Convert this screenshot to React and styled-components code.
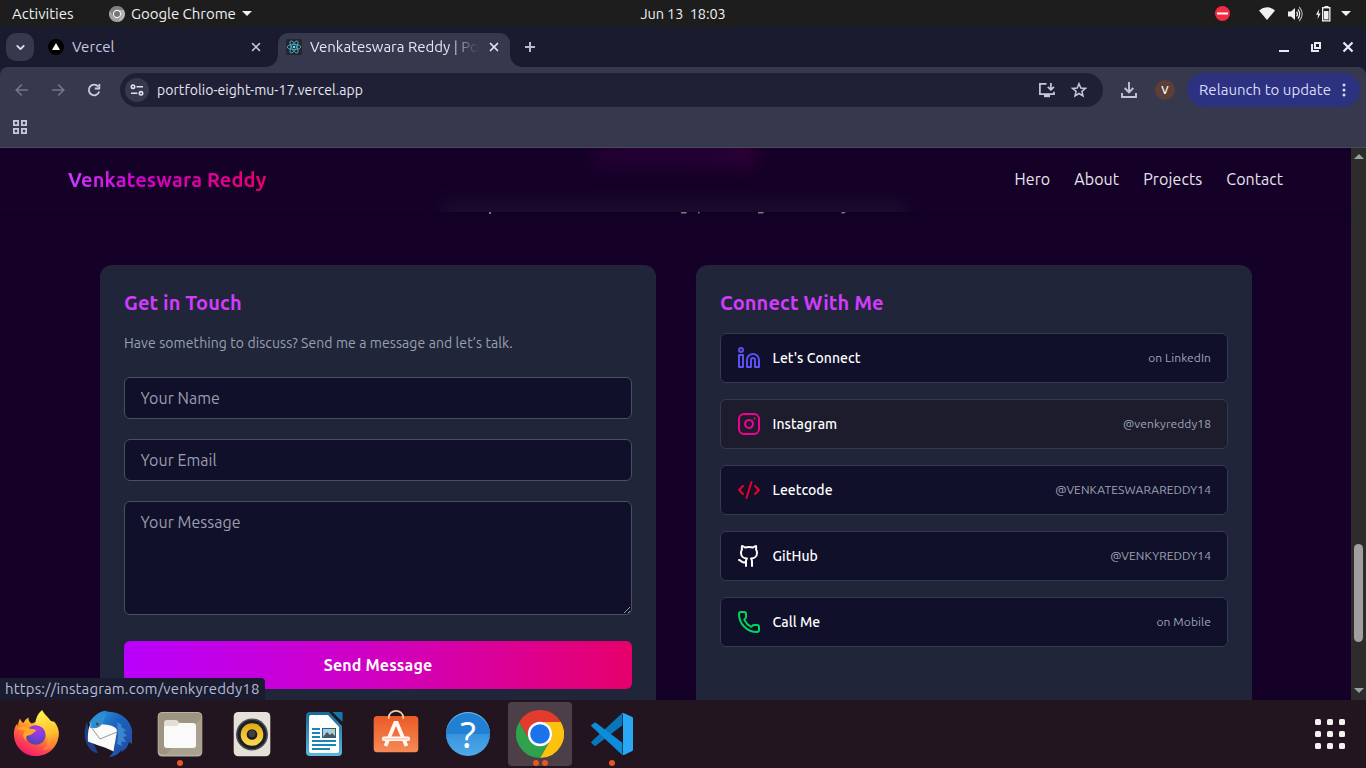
import React from "react";
import styled, { createGlobalStyle, css } from "styled-components";
import { Linkedin, Instagram, CodeXml, Github, Phone, ChevronDown, X } from "lucide-react";

const GlobalStyle = createGlobalStyle`
  * { box-sizing: border-box; }
  body { margin: 0; background: #150028; overflow: hidden; }
  body, input, textarea, button { font-family: "Ubuntu", "Noto Sans", sans-serif; }
  h2, p { margin: 0; }
  svg { display: block; flex: none; }
`;

const Desktop = styled.div`
  width: 1366px;
  height: 768px;
  display: flex;
  flex-direction: column;
  overflow: hidden;
`;

const Label = styled.span`
  white-space: pre;
  font-size: ${(p) => p.$size || 15}px;
  letter-spacing: ${(p) => p.$track || 0}px;
  font-weight: ${(p) => p.$weight || 400};
  color: ${(p) => p.$color || "inherit"};
`;

/* ---------- system bar ---------- */
const SystemBar = styled.header`
  height: 27px;
  flex: none;
  background: #1d1d1d;
  color: #f0f0f0;
  display: grid;
  grid-template-columns: 1fr auto 1fr;
  align-items: center;
  line-height: 27px;
`;
const SystemLeft = styled.div`
  display: flex;
  align-items: center;
  padding-left: 12px;
`;
const ActivitiesLabel = styled.div`
  width: 97px;
`;
const AppMenu = styled.div`
  display: flex;
  align-items: center;
  gap: 6px;
`;
const Caret = styled.span`
  border: 5px solid transparent;
  border-top-color: ${(p) => p.$color || "#f0f0f0"};
  border-bottom: 0;
`;
const SystemTray = styled.div`
  display: flex;
  align-items: center;
  justify-content: flex-end;
  padding-right: 15px;
`;
const TrayItem = styled.span`
  display: flex;
  margin-right: ${(p) => p.$gap}px;
`;

/* ---------- browser chrome ---------- */
const TabStrip = styled.div`
  height: 40px;
  flex: none;
  background: #1a1b2f;
  display: flex;
  padding: 6px 12px 0 6px;
  color: #c9cae0;
`;
const TabSearch = styled.div`
  width: 28px;
  height: 28px;
  border-radius: 10px;
  background: #36384e;
  color: #e4e5f2;
  display: flex;
  align-items: center;
  justify-content: center;
`;
const Tab = styled.div`
  position: relative;
  height: 34px;
  display: flex;
  align-items: center;
  padding-bottom: 6px;
  width: ${(p) => p.$width}px;
  padding-left: ${(p) => p.$left}px;
  padding-right: ${(p) => p.$right}px;
  ${(p) =>
    p.$active &&
    css`
      background: #36384e;
      color: #e6e6f3;
      border-radius: 10px 10px 0 0;
      &::before,
      &::after {
        content: "";
        position: absolute;
        bottom: 0;
        width: 12px;
        height: 12px;
      }
      &::before {
        left: -12px;
        background: radial-gradient(circle at 0 0, transparent 11.5px, #36384e 12px);
      }
      &::after {
        right: -12px;
        background: radial-gradient(circle at 100% 0, transparent 11.5px, #36384e 12px);
      }
    `}
`;
const TabTitle = styled.div`
  flex: 1;
  margin-left: 8px;
  line-height: 26px;
  padding-bottom: 1px;
  ${(p) => p.$fade && "-webkit-mask-image: linear-gradient(90deg, #000 138px, transparent 168px);"}
`;
const NewTab = styled.div`
  width: 40px;
  height: 28px;
  display: flex;
  align-items: center;
  justify-content: center;
`;
const WindowButtons = styled.div`
  margin-left: auto;
  display: flex;
  align-items: center;
  height: 28px;
  gap: 20px;
`;
const ToolbarBack = styled.div`
  background: #1a1b2f;
  flex: none;
`;
const Toolbar = styled.div`
  height: 81px;
  background: #36384e;
  border-radius: 8px 8px 0 0;
  border-bottom: 1px solid #4a4a56;
`;
const AddressRow = styled.div`
  display: flex;
  align-items: center;
  padding: 6px 6px 0 12px;
  height: 40px;
`;
const NavButtons = styled.div`
  display: flex;
  width: 108px;
  gap: 16px;
`;
const Omnibox = styled.div`
  width: 983px;
  height: 34px;
  border-radius: 17px;
  background: #1f2035;
  display: flex;
  align-items: center;
  padding: 0 15px 0 5px;
  color: #e6e6f3;
`;
const SiteChip = styled.div`
  width: 24px;
  height: 24px;
  border-radius: 50%;
  background: #36384e;
  display: flex;
  align-items: center;
  justify-content: center;
  margin-right: 8px;
`;
const OmniIcons = styled.div`
  margin-left: auto;
  display: flex;
  align-items: center;
  gap: 14px;
`;
const DownloadSlot = styled.div`
  margin-left: 17px;
  width: 35px;
`;
const Avatar = styled.div`
  width: 20px;
  height: 20px;
  border-radius: 50%;
  background: #5c4037;
  color: #fff;
  font-size: 11px;
  font-weight: 500;
  line-height: 20px;
  text-align: center;
`;
const Relaunch = styled.div`
  margin-left: 12px;
  width: 173px;
  height: 34px;
  border-radius: 17px;
  background: #2c3180;
  color: #dadcfa;
  display: flex;
  align-items: center;
  justify-content: space-between;
  padding: 0 14px 1px 12px;
`;
const Bookmarks = styled.div`
  padding: 13px 13px;
`;

/* ---------- web page ---------- */
const Viewport = styled.div`
  height: 552px;
  flex: none;
  display: flex;
  position: relative;
  overflow: hidden;
  background: #150028;
`;
const Page = styled.main`
  width: 1351px;
  overflow: hidden;
`;
const SiteNav = styled.nav`
  position: relative;
  isolation: isolate;
  overflow: hidden;
  height: 64px;
  display: flex;
  align-items: center;
  justify-content: space-between;
  padding: 0 68px 1px;
  box-shadow: 0 2px 4px rgba(0, 0, 0, 0.16);
  background: #150027;
  &::before,
  &::after {
    content: "";
    position: absolute;
    z-index: -1;
    filter: blur(8px);
  }
  &::before {
    left: 593px;
    top: -12px;
    width: 163px;
    height: 33px;
    background: linear-gradient(90deg, #220032, #240034 75%, #2e0036);
  }
  &::after {
    left: 442px;
    top: 54px;
    width: 466px;
    height: 20px;
    background: #1d0c30;
  }
`;
const Brand = styled.div`
  font-size: 20px;
  font-weight: 700;
  letter-spacing: 0.12px;
  line-height: 28px;
  white-space: nowrap;
  background: linear-gradient(90deg, #c83cff, #d400cf 35%, #e8006c);
  background-clip: text;
  -webkit-background-clip: text;
  color: transparent;
`;
const NavLinks = styled.div`
  display: flex;
  gap: 24px;
  color: #e8e4ee;
  padding-bottom: 1px;
`;
const Peek = styled.div`
  height: 53px;
  display: flex;
  padding-left: 489px;
`;
const Cards = styled.section`
  display: grid;
  grid-template-columns: 556px 556px;
  gap: 40px;
  padding-left: 100px;
`;
const Card = styled.article`
  height: 480px;
  border-radius: 12px;
  background: #20253a;
  padding: 24px;
`;
const CardTitle = styled.h2`
  font-size: 20px;
  line-height: 28px;
  font-weight: 700;
  letter-spacing: 0.09px;
  color: #d03cfa;
  margin-bottom: 16px;
`;
const Intro = styled.p`
  font-size: 14px;
  line-height: 20px;
  letter-spacing: 0.09px;
  color: #99a1af;
  margin-bottom: 24px;
`;
const fieldStyle = css`
  display: block;
  width: 100%;
  border: 1px solid #4a5063;
  border-radius: 6px;
  background: #10102a;
  color: #fff;
  font-size: 16px;
  line-height: 24px;
  letter-spacing: 0.04px;
  padding: 8px 15.5px;
  outline: 0;
  &::placeholder {
    color: #989eac;
    opacity: 1;
  }
`;
const Field = styled.input`
  ${fieldStyle}
  height: 42px;
  margin-bottom: 20px;
`;
const Message = styled.textarea`
  ${fieldStyle}
  height: 114px;
  margin-bottom: 26px;
  resize: vertical;
`;
const SendButton = styled.button`
  width: 100%;
  height: 48px;
  border: 0;
  border-radius: 6px;
  color: #fff;
  font-size: 16px;
  font-weight: 700;
  letter-spacing: 0.14px;
  background: linear-gradient(90deg, #b900fc, #ce00c8 45%, #e6006b);
`;
const LinkList = styled.div`
  display: grid;
  gap: 16px;
`;
const LinkRow = styled.a`
  height: 50px;
  border: 1px solid #353a50;
  border-radius: 6px;
  background: ${(p) => (p.$hover ? "#1c1c2c" : "#10102a")};
  display: flex;
  align-items: center;
  padding: 0 16px;
  color: #fff;
`;
const LinkName = styled.div`
  margin-left: 11.5px;
  flex: 1;
  line-height: 20px;
  padding-bottom: 2px;
`;
const LinkNote = styled.div`
  line-height: 16px;
  padding-bottom: 2px;
`;

const Scrollbar = styled.div`
  width: 15px;
  background: #2c2c2c;
  display: flex;
  flex-direction: column;
  align-items: center;
  padding: 6px 0 7px;
`;
const Thumb = styled.div`
  width: 9px;
  height: 98px;
  border-radius: 5px;
  background: #9f9f9f;
  margin: 385px 0 auto;
`;
const ScrollArrow = styled.span`
  border: 5px solid transparent;
  ${(p) =>
    p.$up
      ? "border-bottom-color: #9f9f9f; border-top: 0;"
      : "border-top-color: #9f9f9f; border-bottom: 0;"}
`;
const StatusBubble = styled.div`
  position: absolute;
  left: 0;
  bottom: 0;
  width: 265px;
  height: 22px;
  line-height: 21px;
  padding-left: 5px;
  background: #1a1b2f;
  border-top-right-radius: 4px;
  color: #b9bbd6;
`;

/* ---------- dock ---------- */
const Dock = styled.footer`
  height: 68px;
  background: #23151f;
  display: flex;
  align-items: flex-start;
  padding: 2px 4px;
`;
const DockItem = styled.div`
  width: 64px;
  height: 64px;
  margin-right: 8px;
  padding-top: 8px;
  border-radius: 4px;
  display: flex;
  flex-direction: column;
  align-items: center;
  background: ${(p) => (p.$active ? "#4c3f48" : "transparent")};
`;
const Dots = styled.div`
  display: flex;
  gap: 3px;
  margin-top: 2px;
`;
const Dot = styled.span`
  width: 6px;
  height: 6px;
  border-radius: 50%;
  background: #ea5420;
`;
const AppsGrid = styled.div`
  margin: 17px 17px 0 auto;
  display: grid;
  grid-template-columns: repeat(3, 6px);
  grid-auto-rows: 6px;
  gap: 6px;
`;
const AppsDot = styled.span`
  border-radius: 1.5px;
  background: #f3f1ef;
`;

/* ---------- drawings ---------- */
const ChromeIcon = () => (
  <svg width="48" height="48" viewBox="0 0 48 48">
    <path fill="#e33b2e" d="M24 12H44.8A24 24 0 0 0 3.2 12L13.6 30A12 12 0 0 1 24 12Z" />
    <path fill="#fcc20e" d="M34.4 30L24 48A24 24 0 0 0 44.8 12H24A12 12 0 0 1 34.4 30Z" />
    <path fill="#2ea24c" d="M13.6 30L3.2 12A24 24 0 0 0 24 48L34.4 30A12 12 0 0 1 13.6 30Z" />
    <circle cx="24" cy="24" r="12.2" fill="#fff" />
    <circle cx="24" cy="24" r="9.8" fill="#1a73e8" />
  </svg>
);
const ChromeSymbolicIcon = () => (
  <svg width="16" height="16" viewBox="0 0 48 48">
    <path fill="#808080" d="M24 12H44.8A24 24 0 0 0 3.2 12L13.6 30A12 12 0 0 1 24 12Z" />
    <path fill="#b4b4b4" d="M34.4 30L24 48A24 24 0 0 0 44.8 12H24A12 12 0 0 1 34.4 30Z" />
    <path fill="#a0a0a0" d="M13.6 30L3.2 12A24 24 0 0 0 24 48L34.4 30A12 12 0 0 1 13.6 30Z" />
    <circle cx="24" cy="24" r="12.5" fill="#f4f4f4" />
    <circle cx="24" cy="24" r="9" fill="#757575" />
  </svg>
);

const DndIcon = () => (
  <svg width="15" height="15" viewBox="0 0 15 15">
    <circle cx="7.5" cy="7.5" r="7.5" fill="#f22c42" />
    <rect x="2" y="6.5" width="11" height="2" fill="#fff" />
  </svg>
);
const WifiIcon = () => (
  <svg width="16" height="13" viewBox="0 0 16 13">
    <path fill="#f0f0f0" d="M0 3.5Q8-3 16 3.5L8 13Z" />
  </svg>
);
const SoundIcon = () => (
  <svg width="16" height="16" viewBox="0 0 16 16" fill="none" stroke="#f0f0f0" strokeWidth="1.2">
    <path d="M0 5.5H3L7 2V14L3 10.5H0Z" fill="#f0f0f0" stroke="none" />
    <path d="M8.6 5.6Q10.4 8 8.6 10.4M10 3.3Q13.3 8 10 12.7" />
    <path d="M11.2 1Q17.2 8 11.2 15" stroke="#a5a5a5" />
  </svg>
);
const BatteryIcon = () => (
  <svg width="16" height="16" viewBox="0 0 16 16">
    <path fill="#f0f0f0" d="M3.2 3L0 8.7H2.1L1.5 13L4.6 7.4H2.6Z" />
    <path fill="#f0f0f0" d="M8.5 0H12.5V1H14.5V15.5H6V1H8.5Z" />
    <path fill="#1d1d1d" d="M7.3 2.4H13.2V14.2H7.3Z" />
    <path fill="#f0f0f0" d="M8 5H12.5V13.4H8Z" />
  </svg>
);
const VercelIcon = () => (
  <svg width="16" height="16" viewBox="0 0 16 16">
    <circle cx="8" cy="8" r="8" fill="#000" />
    <path d="M8 4L12 11H4Z" fill="#fff" />
  </svg>
);
const ReactIcon = () => (
  <svg width="16" height="16" viewBox="0 0 16 16">
    <rect width="16" height="16" rx="1.5" fill="#23272d" />
    <g fill="none" stroke="#4fb7d0" strokeWidth="0.8">
      <ellipse cx="8" cy="8" rx="6.8" ry="2.6" />
      <ellipse cx="8" cy="8" rx="6.8" ry="2.6" transform="rotate(60 8 8)" />
      <ellipse cx="8" cy="8" rx="6.8" ry="2.6" transform="rotate(120 8 8)" />
    </g>
    <circle cx="8" cy="8" r="1.3" fill="#61dafb" />
  </svg>
);
const PlusIcon = () => (
  <svg width="10" height="10" viewBox="0 0 10 10" stroke="#b9bbd6" strokeWidth="2">
    <path d="M5 0V10M0 5H10" />
  </svg>
);
const MinimizeIcon = () => (
  <svg width="12" height="12" viewBox="0 0 12 12">
    <path fill="#eaeaf2" d="M1 9H11V11H1Z" />
  </svg>
);
const RestoreIcon = () => (
  <svg width="12" height="12" viewBox="0 0 12 12" fill="none" stroke="#eaeaf2" strokeWidth="2">
    <path d="M5 2H10V7H5Z" />
    <path d="M2 3V10H9" />
  </svg>
);
const CloseIcon = () => (
  <svg width="12" height="12" viewBox="0 0 12 12" stroke="#eaeaf2" strokeWidth="2.2">
    <path d="M1.5 1.5L10.5 10.5M10.5 1.5L1.5 10.5" />
  </svg>
);
const ArrowIcon = ({ right }) => (
  <svg width="20" height="20" viewBox="0 0 20 20" fill="none" stroke="#73758a" strokeWidth="1.7">
    <path d={right ? "M4 10H15.5M10.2 4.5L15.7 10L10.2 15.5" : "M16 10H4.5M9.8 4.5L4.3 10L9.8 15.5"} />
  </svg>
);
const ReloadIcon = () => (
  <svg width="20" height="20" viewBox="0 0 20 20" fill="none" stroke="#c9cae6" strokeWidth="1.8">
    <path d="M14.2 6.6A5.3 5.3 0 1 0 15.2 11.5" />
    <path d="M15.3 4V8.5H10.8" />
  </svg>
);
const TuneIcon = () => (
  <svg width="14" height="12" viewBox="0 0 14 12" fill="none" stroke="#e0e1f0" strokeWidth="1.6">
    <circle cx="3" cy="2.7" r="1.7" />
    <path d="M6.5 2.7H13M1 9.3H7.3" />
    <circle cx="11" cy="9.3" r="1.7" />
  </svg>
);
const InstallIcon = () => (
  <svg width="18" height="16" viewBox="0 0 18 16" fill="none" stroke="#c6c7da" strokeWidth="1.7">
    <path d="M8.5 1.8H1.9V12.2H16V9.8" />
    <path d="M12.9 1V7.6M9.8 4.8L12.9 7.9L16 4.8" />
    <path d="M6 14H12" strokeWidth="2.4" />
  </svg>
);
const StarIcon = () => (
  <svg width="18" height="18" viewBox="0 0 18 18" fill="none" stroke="#c6c7da" strokeWidth="1.5">
    <path d="M9 2.7L10.8 7L15.5 7.4L11.9 10.4L13 15L9 12.5L5 15L6.1 10.4L2.5 7.4L7.2 7Z" />
  </svg>
);
const DownloadIcon = () => (
  <svg width="18" height="18" viewBox="0 0 18 18" fill="none" stroke="#c3c4e2" strokeWidth="1.9">
    <path d="M9 1V11M4.7 7L9 11.3L13.3 7M2 12V16H16V12" />
  </svg>
);
const KebabIcon = () => (
  <svg width="4" height="14" viewBox="0 0 4 14" fill="#dadcfa">
    <circle cx="2" cy="2" r="1.5" />
    <circle cx="2" cy="7" r="1.5" />
    <circle cx="2" cy="12" r="1.5" />
  </svg>
);
const GridIcon = () => (
  <svg width="14" height="14" viewBox="0 0 14 14" fill="none" stroke="#c6c7da" strokeWidth="1.8">
    <path d="M0.9 0.9H5.1V5.1H0.9ZM8.9 0.9H13.1V5.1H8.9ZM0.9 8.9H5.1V13.1H0.9ZM8.9 8.9H13.1V13.1H8.9Z" />
  </svg>
);
const Descenders = () => (
  <svg width="360" height="2" viewBox="0 0 360 2" fill="#8b8796">
    <path d="M0 0H2V2H0ZM192 0H198L197 1.6H192ZM209 0H211L210 1.5H209ZM269 0H275L274 1.6H269ZM353 0H357L355 1.6H352Z" />
  </svg>
);

const FirefoxIcon = () => (
  <svg width="48" height="48" viewBox="0 0 48 48">
    <defs>
      <linearGradient id="ffBody" x1="0.8" y1="0.05" x2="0.25" y2="0.95">
        <stop offset="0" stopColor="#ffe83c" />
        <stop offset="0.4" stopColor="#ff9a24" />
        <stop offset="0.7" stopColor="#ff4a4c" />
        <stop offset="1" stopColor="#ee1b70" />
      </linearGradient>
      <linearGradient id="ffTail" x1="0.4" y1="0" x2="0.6" y2="1">
        <stop offset="0" stopColor="#fff44f" />
        <stop offset="0.6" stopColor="#ffc02e" />
        <stop offset="1" stopColor="#ff7139" />
      </linearGradient>
      <radialGradient id="ffGlobe" cx="0.6" cy="0.2" r="0.8">
        <stop offset="0" stopColor="#b833e8" />
        <stop offset="0.6" stopColor="#7441d8" />
        <stop offset="1" stopColor="#4b46a8" />
      </radialGradient>
    </defs>
    <path fill="url(#ffBody)" d="M8 8.5C9.2 11 10 12.2 11.4 13.1C12.8 10 14.5 8.5 16.6 7.4C16.3 10 17.3 12.3 19.8 13.4L31 9L41 11.5C44.5 14.5 46.6 19 46.6 24.5C46.2 37 36.2 46 24.4 46C11.6 46 1.8 36.4 1.9 23.4C2 19.3 3.2 16.2 5.2 13.6C5.3 15 5.5 15.8 6 16.5C6 13.7 6.6 11 8 8.5Z" />
    <path fill="url(#ffTail)" d="M30.2 0C32 4.6 39 8.8 41.6 15.8C42 14 41.9 12.4 41.3 10.8C46 15.6 47.9 21.8 46 28.3C43.8 36 37 40.5 30 39.5C36 37 37 29.5 33.8 24.5C32 20 26 17 23.3 14C23.6 8 26.5 2.8 30.2 0Z" />
    <circle cx="23.8" cy="25" r="9.8" fill="url(#ffGlobe)" />
    <path fill="#ffa62a" d="M5.8 18.6C9.5 15.7 15 16.6 18.4 19C20.8 18.4 23 19.2 24.3 20.8C21.7 22.2 20.5 24.8 17.2 25.2C14.2 25.5 12.8 27 14.6 31C9.7 28 10.8 22.3 14 20.8C11.5 20 8.3 19.6 5.8 18.6Z" />
  </svg>
);
const ThunderbirdIcon = () => (
  <svg width="48" height="48" viewBox="0 0 48 48">
    <defs>
      <linearGradient id="tbBody" x1="0" y1="0" x2="1" y2="1">
        <stop offset="0" stopColor="#36a4e8" />
        <stop offset="0.45" stopColor="#1a63bd" />
        <stop offset="1" stopColor="#2348a2" />
      </linearGradient>
    </defs>
    <path fill="#1f3f86" d="M3 12C-1 22 0 33 7 40C10 43 12 43 14 43L8 30Z" />
    <path fill="url(#tbBody)" d="M5 13C11 4 18 0 24 1L21 2C35 0 46 9 48 20V34L45 32C44 37 41 40 37 42L38 39C35 44 31 46.5 25 47C31 42 32 35 30 28L10 20Z" />
    <path fill="#3b86cc" d="M33 12L38 15L37 17L42 20L39 22L43 26L39 27L42 32L37 31.5L38 36L33 34L34 26Z" />
    <path fill="#fafafa" d="M7 13L20 14.5C28 15 33 17.5 33 21L29.5 41.5C20 36.5 12 35 4 31.5C3.5 24 4.5 17 7 13Z" />
    <path fill="#2c8ed3" d="M6 18C7 9 13 4 24 3.5C19 8 20 14 15 17C10 19.5 8 17 6 18Z" />
    <path fill="none" stroke="#8c8c8c" strokeWidth="0.9" d="M7 17L16 29L33 22" />
    <circle cx="13.3" cy="14" r="1.5" fill="#713a27" />
  </svg>
);
const FilesIcon = () => (
  <svg width="48" height="48" viewBox="0 0 48 48">
    <rect x="1.7" y="2" width="44.6" height="44.5" rx="4.5" fill="#b9b2a2" />
    <rect x="2.5" y="3" width="43" height="41.5" rx="4" fill="#9d9580" />
    <path fill="#aaa28f" d="M10 44.5L45.5 8V40.5Q45.5 44.5 41.5 44.5Z" />
    <path fill="#e3dfd6" d="M8 13Q8 10 11 10H20Q21.5 10 22.5 12Q23 13 25 13H36V30H8Z" />
    <path fill="#fafafa" d="M8 17.5Q8 16 10 16H20Q22 16 22.5 14.5Q23 13 25 13H37Q40 13 40 16V35Q40 38 37 38H11Q8 38 8 35Z" />
  </svg>
);
const RhythmboxIcon = () => (
  <svg width="48" height="48" viewBox="0 0 48 48">
    <defs>
      <linearGradient id="rbCone" x1="0" y1="0" x2="0" y2="1">
        <stop offset="0" stopColor="#dfa911" />
        <stop offset="1" stopColor="#ffda58" />
      </linearGradient>
    </defs>
    <rect x="5.7" y="2" width="36.6" height="44.3" rx="4.5" fill="#e6e1d8" />
    <circle cx="24" cy="24.5" r="16" fill="#4a5056" />
    <circle cx="24" cy="24.5" r="14.5" fill="#1c2025" />
    <circle cx="24" cy="24.5" r="11.3" fill="url(#rbCone)" />
    <circle cx="24" cy="24.5" r="5.3" fill="#1a1a1a" />
    <circle cx="24" cy="23.7" r="3.5" fill="#414141" />
  </svg>
);
const WriterIcon = () => (
  <svg width="48" height="48" viewBox="0 0 48 48">
    <defs>
      <linearGradient id="lwBody" x1="0" y1="0" x2="0" y2="1">
        <stop offset="0" stopColor="#146b96" />
        <stop offset="1" stopColor="#5bb9de" />
      </linearGradient>
    </defs>
    <path fill="url(#lwBody)" d="M10 2H29L42 16V42Q42 46 38 46H10Q6 46 6 42V6Q6 2 10 2Z" />
    <path fill="#1479a9" d="M32.5 2H42.5V12Z" />
    <path fill="#fff" d="M11 5H28L39 17V41Q39 43 37 43H11Q9 43 9 41V7Q9 5 11 5Z" />
    <path stroke="#1983bb" strokeWidth="1.8" d="M12 19H20M12 23H20M12 27H20M12 31H36M12 35H36M12 39H30" />
    <path fill="#2c5f80" d="M22 18H36V28H22Z" />
    <path fill="#9bd3ef" d="M23 19H35V27H23Z" />
    <path fill="#555" d="M23 27L27 22L30 25L32 23L35 26V27Z" />
    <circle cx="33.5" cy="20.5" r="1.4" fill="#f4c434" />
  </svg>
);
const SoftwareIcon = () => (
  <svg width="48" height="48" viewBox="0 0 48 48">
    <defs>
      <linearGradient id="swBag" x1="0" y1="0" x2="0" y2="1">
        <stop offset="0" stopColor="#ec5a24" />
        <stop offset="1" stopColor="#f58a56" />
      </linearGradient>
    </defs>
    <rect x="1.7" y="6" width="44.6" height="36.3" rx="3.5" fill="url(#swBag)" />
    <path fill="none" stroke="#f2d0a2" strokeWidth="1.7" d="M16.7 9V8C16.7-1.4 31.3-1.4 31.3 8V9" />
    <g fill="none" stroke="#fff8f3" strokeWidth="3.8">
      <path d="M13.5 36L23.2 13H24.8L34.5 36" />
      <path d="M12 28.8H36" strokeLinecap="round" strokeWidth="4.4" />
    </g>
    <path stroke="#f8b996" strokeWidth="1" d="M12 28.9H36" />
  </svg>
);
const HelpMark = styled.div`
  width: 44px;
  height: 44px;
  margin: 2px 0;
  border-radius: 50%;
  background: linear-gradient(#2280d4 0 49%, #3793df 50%, #4faae8);
  box-shadow: inset 0 1px 0 #70b7eb;
  color: #fff;
  font-family: "Noto Sans", sans-serif;
  font-size: 36px;
  line-height: 46px;
  text-align: center;
`;
const CodeIcon = () => (
  <svg width="48" height="48" viewBox="0 0 48 48">
    <g transform="translate(3 3) scale(.3333)">
      <path fill="#0877b9" d="M94 0L1 86Q-1 89 2 91L10 98Q13 100 16 97L94 37Z" />
      <path fill="#0e8cdc" d="M94 126L1 40Q-1 37 2 35L10 29Q13 27 16 30L94 89Z" />
      <path fill="#29a8f5" d="M94 0Q97-1 99 1L124 12Q126 13 126 16V110Q126 113 124 114L99 126Q95 127 92 124Q96 125 96 119V7Q96 1 92 2Z" />
    </g>
  </svg>
);

const dock = [
  { id: "firefox", icon: <FirefoxIcon />, dots: 0 },
  { id: "thunderbird", icon: <ThunderbirdIcon />, dots: 0 },
  { id: "files", icon: <FilesIcon />, dots: 1 },
  { id: "rhythmbox", icon: <RhythmboxIcon />, dots: 0 },
  { id: "writer", icon: <WriterIcon />, dots: 0 },
  { id: "software", icon: <SoftwareIcon />, dots: 0 },
  { id: "help", icon: <HelpMark>?</HelpMark>, dots: 0 },
  { id: "chrome", icon: <ChromeIcon />, dots: 2, active: true },
  { id: "code", icon: <CodeIcon />, dots: 1 },
];

const links = [
  { name: "Let's Connect", note: "on LinkedIn", Icon: Linkedin, color: "#5b50f5" },
  { name: "Instagram", note: "@venkyreddy18", Icon: Instagram, color: "#f20094", hover: true },
  { name: "Leetcode", note: "@VENKATESWARAREDDY14", Icon: CodeXml, color: "#ea0029" },
  { name: "GitHub", note: "@VENKYREDDY14", Icon: Github, color: "#ffffff" },
  { name: "Call Me", note: "on Mobile", Icon: Phone, color: "#00d65b" },
];

export default function App() {
  return (
    <Desktop>
      <GlobalStyle />
      <SystemBar>
        <SystemLeft>
          <ActivitiesLabel><Label $size={15}>Activities</Label></ActivitiesLabel>
          <AppMenu>
            <ChromeSymbolicIcon />
            <Label $size={15} $track={-0.03}>Google Chrome</Label>
            <Caret />
          </AppMenu>
        </SystemLeft>
        <Label $size={14.5} $track={-0.08}>Jun 13  18:03</Label>
        <SystemTray>
          <TrayItem $gap={29}><DndIcon /></TrayItem>
          <TrayItem $gap={13}><WifiIcon /></TrayItem>
          <TrayItem $gap={12}><SoundIcon /></TrayItem>
          <TrayItem $gap={9}><BatteryIcon /></TrayItem>
          <Caret />
        </SystemTray>
      </SystemBar>

      <TabStrip>
        <TabSearch><ChevronDown size={13} strokeWidth={3.2} /></TabSearch>
        <Tab $width={244} $left={14} $right={15}>
          <VercelIcon />
          <TabTitle><Label $size={15} $track={0.08}>Vercel</Label></TabTitle>
          <X size={14} strokeWidth={2.7} />
        </Tab>
        <Tab $active $width={232} $left={8} $right={9}>
          <ReactIcon />
          <TabTitle $fade><Label $size={15}>Venkateswara Reddy | Po</Label></TabTitle>
          <X size={14} strokeWidth={2.9} />
        </Tab>
        <NewTab><PlusIcon /></NewTab>
        <WindowButtons><MinimizeIcon /><RestoreIcon /><CloseIcon /></WindowButtons>
      </TabStrip>

      <ToolbarBack>
        <Toolbar>
          <AddressRow>
            <NavButtons><ArrowIcon /><ArrowIcon right /><ReloadIcon /></NavButtons>
            <Omnibox>
              <SiteChip><TuneIcon /></SiteChip>
              <Label $size={14} $track={0.05}>portfolio-eight-mu-17.vercel.app</Label>
              <OmniIcons><InstallIcon /><StarIcon /></OmniIcons>
            </Omnibox>
            <DownloadSlot><DownloadIcon /></DownloadSlot>
            <Avatar>V</Avatar>
            <Relaunch>
              <Label $size={15} $track={0.03}>Relaunch to update</Label>
              <KebabIcon />
            </Relaunch>
          </AddressRow>
          <Bookmarks><GridIcon /></Bookmarks>
        </Toolbar>
      </ToolbarBack>

      <Viewport>
        <Page>
          <SiteNav>
            <Brand>Venkateswara Reddy</Brand>
            <NavLinks>
              <Label $size={16} $track={0.08}>Hero</Label>
              <Label $size={16} $track={0.08}>About</Label>
              <Label $size={16} $track={0.1}>Projects</Label>
              <Label $size={16} $track={0.02}>Contact</Label>
            </NavLinks>
          </SiteNav>
          <Peek><Descenders /></Peek>
          <Cards>
            <Card>
              <CardTitle>Get in Touch</CardTitle>
              <Intro>Have something to discuss? Send me a message and let’s talk.</Intro>
              <Field placeholder="Your Name" />
              <Field placeholder="Your Email" />
              <Message placeholder="Your Message" />
              <SendButton>Send Message</SendButton>
            </Card>
            <Card>
              <CardTitle>Connect With Me</CardTitle>
              <LinkList>
                {links.map(({ name, note, Icon, color, hover }) => (
                  <LinkRow key={name} $hover={hover}>
                    <Icon size={24} color={color} />
                    <LinkName><Label $size={14} $weight={500} $track={0.05}>{name}</Label></LinkName>
                    <LinkNote><Label $size={12} $track={0.08} $color="#9ea5b3">{note}</Label></LinkNote>
                  </LinkRow>
                ))}
              </LinkList>
            </Card>
          </Cards>
        </Page>
        <Scrollbar>
          <ScrollArrow $up />
          <Thumb />
          <ScrollArrow />
        </Scrollbar>
        <StatusBubble><Label $size={15} $track={0.13}>https://instagram.com/venkyreddy18</Label></StatusBubble>
      </Viewport>

      <Dock>
        {dock.map((d) => (
          <DockItem key={d.id} $active={d.active}>
            {d.icon}
            <Dots>{Array.from({ length: d.dots }, (_, i) => <Dot key={i} />)}</Dots>
          </DockItem>
        ))}
        <AppsGrid>{Array.from({ length: 9 }, (_, i) => <AppsDot key={i} />)}</AppsGrid>
      </Dock>
    </Desktop>
  );
}
